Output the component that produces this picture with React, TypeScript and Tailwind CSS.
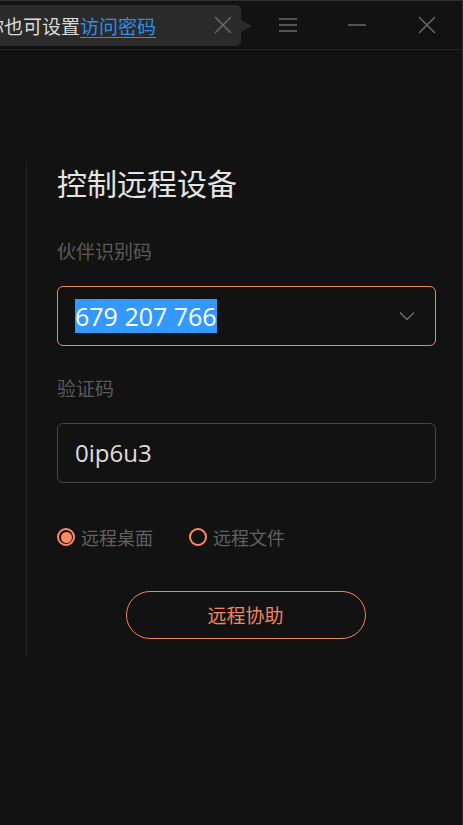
import React from "react";

const cjk = { fontFamily: '"Noto Sans CJK SC", "Noto Sans", sans-serif' };
const num = { fontFamily: '"Open Sans", "Noto Sans CJK SC", sans-serif' };

export default function App() {
  return (
    <div
      className="relative w-[463px] h-[825px] overflow-hidden bg-[#121212] border-t border-r border-[#303030]"
      style={cjk}
    >
      {/* title bar */}
      <div className="h-[49px] border-b border-[#262626] flex items-center justify-end">
        <button className="w-[70px] h-[48px] flex items-center justify-center">
          <svg width="20" height="16" viewBox="0 0 20 16" className="translate-x-[1px]">
            <path d="M1 2h18M1 8h18M1 14h18" stroke="#6a6a6a" strokeWidth="1.5" />
          </svg>
        </button>
        <button className="w-[70px] h-[48px] flex items-center justify-center">
          <svg width="20" height="4" viewBox="0 0 20 4">
            <path d="M1 2h18" stroke="#6a6a6a" strokeWidth="1.5" />
          </svg>
        </button>
        <button className="w-[70px] h-[48px] flex items-center justify-center">
          <svg width="20" height="20" viewBox="0 0 20 20">
            <path d="M2 2l16 16M18 2L2 18" stroke="#6a6a6a" strokeWidth="1.5" />
          </svg>
        </button>
      </div>

      {/* tooltip */}
      <div className="absolute left-[-27px] top-[4px] h-[41px] w-[268px] rounded-[5px] bg-[#2b2b2b] flex items-center pl-[12px]">
        <span className="text-[19px] leading-[26px] text-[#dcdcdc] whitespace-nowrap">
          你也可设置
          <span className="text-[#2f8fe8] underline underline-offset-[3px]">访问密码</span>
        </span>
        <svg width="20" height="20" viewBox="0 0 20 20" className="absolute left-[240px] top-[10px]">
          <path d="M2 2l16 16M18 2L2 18" stroke="#6a6a6a" strokeWidth="1.5" />
        </svg>
        <div className="absolute right-[-11px] top-[15px] w-0 h-0 border-y-[6px] border-y-transparent border-l-[11px] border-l-[#2b2b2b]" />
      </div>

      {/* body */}
      <div className="mt-[112px] ml-[26px] border-l border-[#262626] pl-[30px] pb-[18px] w-[411px]">
        <div className="text-[30px] leading-[40px] text-[#e4e4e4]">控制远程设备</div>

        <div className="mt-[35px] text-[19px] leading-[28px] text-[#5a5a5a]">伙伴识别码</div>
        <div className="mt-[21px] h-[60px] w-[379px] rounded-[6px] border border-[#f08560] flex items-center justify-between pl-[17px] pr-[20px]">
          <span className="text-[25px] leading-[34px] bg-[#3399ff] text-white" style={num}>
            679 207 766
          </span>
          <svg width="16" height="10" viewBox="0 0 16 10">
            <path d="M1 1.5l7 7 7-7" fill="none" stroke="#6a6a6a" strokeWidth="1.5" />
          </svg>
        </div>

        <div className="mt-[28px] text-[19px] leading-[28px] text-[#5a5a5a]">验证码</div>
        <div className="mt-[21px] h-[60px] w-[379px] rounded-[6px] border border-[#464646] flex items-center pl-[17px]">
          <span className="text-[24px] leading-[34px] text-[#dedede]" style={num}>0ip6u3</span>
        </div>

        <div className="mt-[40px] h-[28px] flex items-center">
          <div className="flex items-center">
            <span className="w-[18px] h-[18px] rounded-full border-[2px] border-[#ff8a65] flex items-center justify-center">
              <span className="w-[11px] h-[11px] rounded-full bg-[#ff8a65]" />
            </span>
            <span className="ml-[6px] text-[18px] leading-[28px] text-[#626262]">远程桌面</span>
          </div>
          <div className="flex items-center ml-[36px]">
            <span className="w-[18px] h-[18px] rounded-full border-[2px] border-[#ff8a65]" />
            <span className="ml-[6px] text-[18px] leading-[28px] text-[#626262]">远程文件</span>
          </div>
        </div>

        <div className="mt-[40px] w-[379px] flex justify-center">
          <button className="w-[240px] h-[48px] -translate-x-[1px] rounded-full border border-[#f08560] text-[19px] text-[#f5845e]">
            远程协助
          </button>
        </div>
      </div>
    </div>
  );
}
